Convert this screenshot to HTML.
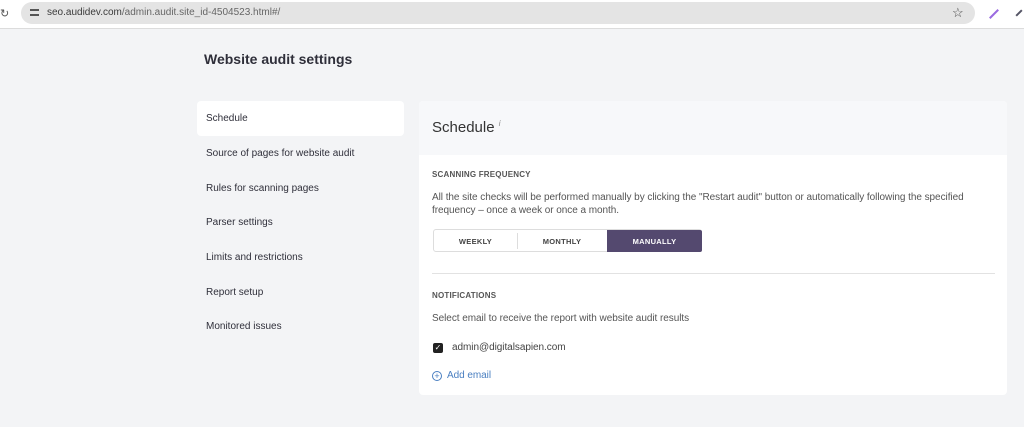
<!DOCTYPE html>
<html><head><meta charset="utf-8"><style>
*{margin:0;padding:0;box-sizing:border-box}
body{width:1024px;height:427px;overflow:hidden;background:#f3f4f6;font-family:"Liberation Sans",sans-serif;color:#333;position:relative}
.abs{position:absolute;white-space:nowrap}
.top{position:absolute;left:0;top:0;width:1024px;height:29px;background:#fff;border-bottom:1px solid #dcdcdc}
.url{position:absolute;left:21px;top:2px;width:954px;height:22px;border-radius:11px;background:#e4e4e4}
.menu{left:206px;font-size:10px;color:#2f2f3a}
.panel{position:absolute;left:419px;top:101px;width:588px;height:294px;background:#fff;border-radius:4px}
.ph{position:absolute;left:0;top:0;width:588px;height:54px;background:#f7f8fa;border-radius:4px 4px 0 0}
.sm{font-size:8px;font-weight:bold;color:#555;letter-spacing:.2px}
.tx{font-size:10px;color:#555;letter-spacing:-.05px}
.btn{position:absolute;top:0;height:22px;font-size:7.5px;font-weight:bold;color:#444;display:flex;align-items:center;justify-content:center;letter-spacing:.3px}
</style></head><body>
<div class="top">
<div class="abs" style="left:0;top:7px;font-size:11px;color:#555">↻</div>
<div class="url"></div>
<div class="abs" style="left:30px;top:9px;width:9px;height:2px;background:#555"></div>
<div class="abs" style="left:30px;top:14px;width:9px;height:2px;background:#555"></div>
<div class="abs" style="left:47px;top:7px;font-size:10px;color:#3a3a3a">seo.audidev.com<span style="color:#666">/admin.audit.site_id-4504523.html#/</span></div>
<div class="abs" style="left:952px;top:5px;font-size:13px;color:#444">☆</div>
<div class="abs" style="left:988px;top:13px;width:12px;height:2px;background:#9a6ae0;transform:rotate(-45deg)"></div>
<div class="abs" style="left:1015px;top:12px;width:8px;height:2px;background:#556;transform:rotate(-45deg)"></div>
</div>
<div class="abs" style="left:204px;top:51px;font-size:14px;font-weight:bold;color:#2f2f3a">Website audit settings</div>
<div class="abs" style="left:197px;top:101px;width:207px;height:35px;background:#fff;border-radius:4px"></div>
<div class="abs menu" style="top:113px">Schedule</div>
<div class="abs menu" style="top:148px">Source of pages for website audit</div>
<div class="abs menu" style="top:183px">Rules for scanning pages</div>
<div class="abs menu" style="top:217px">Parser settings</div>
<div class="abs menu" style="top:252px">Limits and restrictions</div>
<div class="abs menu" style="top:287px">Report setup</div>
<div class="abs menu" style="top:321px">Monitored issues</div>
<div class="panel">
<div class="ph"></div>
<div class="abs" style="left:13px;top:18px;font-size:15px;color:#333">Schedule <sup style="font-size:8px;font-style:italic;color:#888">i</sup></div>
<div class="abs sm" style="left:13px;top:69px">SCANNING FREQUENCY</div>
<div class="abs tx" style="left:13px;top:91px">All the site checks will be performed manually by clicking the "Restart audit" button or automatically following the specified</div>
<div class="abs tx" style="left:13px;top:104px">frequency – once a week or once a month.</div>
<div class="abs" style="left:14px;top:128px;width:269px;height:23px;border:1px solid #ddd;border-radius:3px">
<div class="btn" style="left:0;width:83px">WEEKLY</div>
<div class="abs" style="left:83px;top:3px;width:1px;height:16px;background:#ddd"></div>
<div class="btn" style="left:83px;width:90px">MONTHLY</div>
<div class="btn" style="left:173px;width:95px;background:#54496f;color:#fff;border-radius:0 2px 2px 0">MANUALLY</div>
</div>
<div class="abs" style="left:13px;top:172px;width:563px;height:1px;background:#e2e2e2"></div>
<div class="abs sm" style="left:13px;top:190px">NOTIFICATIONS</div>
<div class="abs tx" style="left:13px;top:212px">Select email to receive the report with website audit results</div>
<div class="abs" style="left:14px;top:242px;width:10px;height:10px;background:#222;border-radius:2px;color:#fff;font-size:8px;line-height:10px;text-align:center">✓</div>
<div class="abs tx" style="left:33px;top:241px;color:#444">admin@digitalsapien.com</div>
<div class="abs" style="left:13px;top:270px;width:10px;height:10px;border:1px solid #4a7fc1;border-radius:50%;color:#4a7fc1;font-size:9px;line-height:8px;text-align:center">+</div>
<div class="abs tx" style="left:28px;top:269px;color:#4a7fc1">Add email</div>
</div>
</body></html>
